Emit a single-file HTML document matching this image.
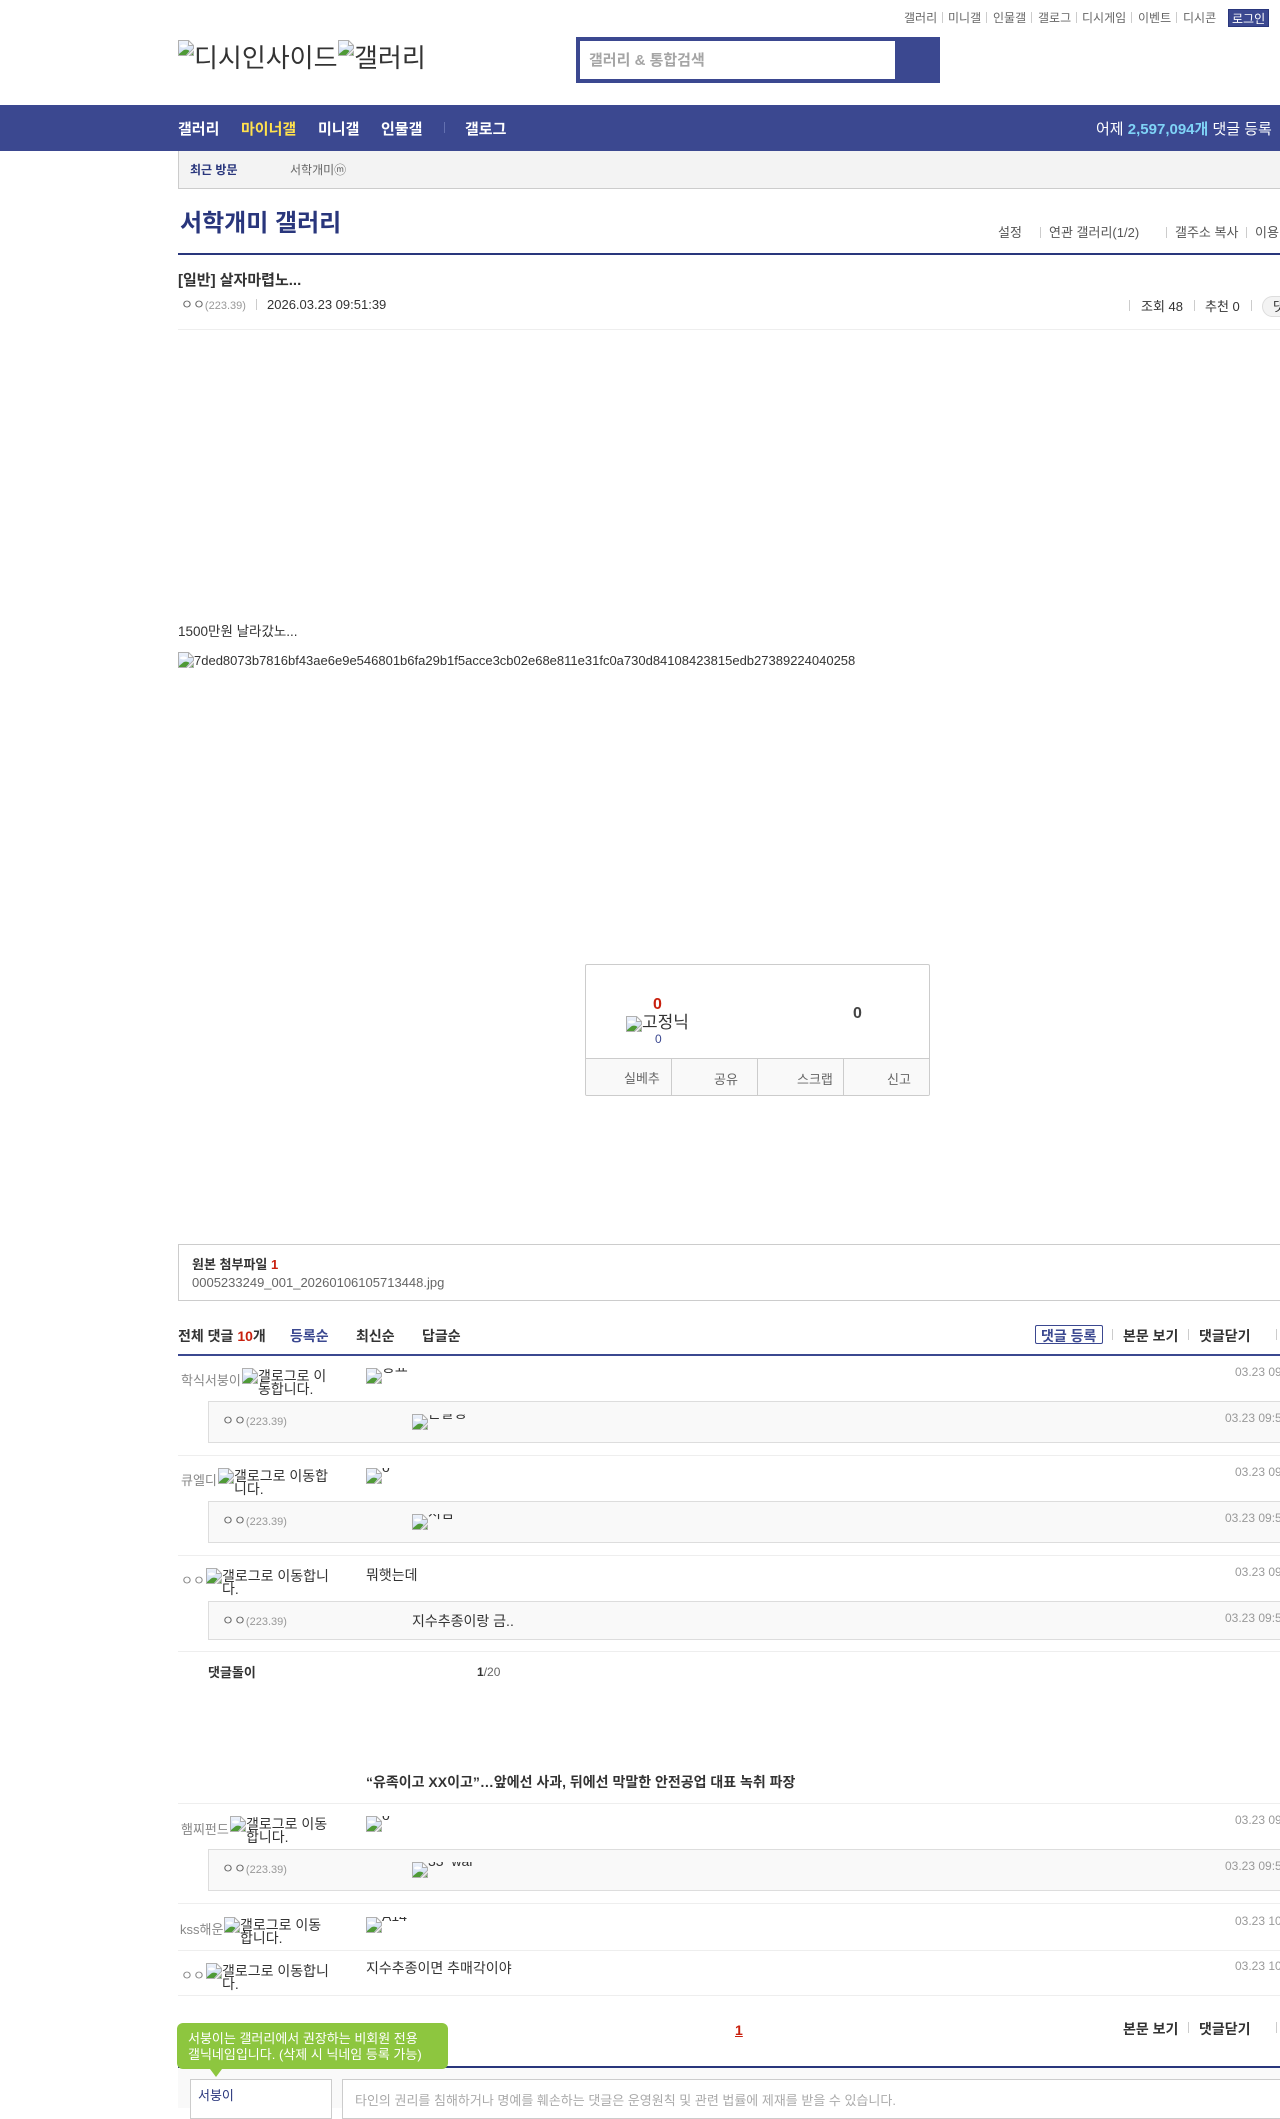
<!DOCTYPE html>
<html lang="ko">
<head>
<meta charset="utf-8">
<title>서학개미 갤러리</title>
<style>
html,body{margin:0;padding:0;background:#fff}
body{width:1280px;height:2108px;position:relative;overflow:hidden;font-family:"Liberation Sans","Noto Sans CJK KR",sans-serif;font-size:13px;color:#333}
.t{position:absolute;white-space:nowrap;line-height:16px}
.r{position:absolute}
.b{font-weight:bold}
.ic{position:absolute;width:16px;height:16px}
.sep{position:absolute;width:1px;height:11px;background:#ccc}
.hl{position:absolute;left:178px;width:1102px;height:1px;background:#eee}
.rep{position:absolute;left:208px;width:1072px;box-sizing:border-box;background:#f9f9f9;border:1px solid #ddd;border-right:0}
.nick{color:#888;font-size:13px}
.g{position:absolute;font-size:14px;line-height:13px;color:#333;white-space:normal;word-break:break-all}
.tm{color:#999;font-size:12px}
.clip{position:absolute;overflow:hidden;height:6px;font-size:14px;color:#333;white-space:nowrap}
.clip span{position:absolute;left:0;bottom:-1px;line-height:16px}
.au{color:#666;font-size:13px}
.au i{font-style:normal;color:#999;font-size:11px}
.top{font-size:12px;color:#666}
.nav{font-size:15px;font-weight:bold;color:#fff}
.blink{font-size:14px;font-weight:bold;color:#333}
.tl{font-size:13px;color:#555}
</style>
</head>
<body>
<svg width="0" height="0" style="position:absolute">
<defs><linearGradient id="sky" x1="0" y1="0" x2="0" y2="1"><stop offset="0" stop-color="#eef3fb"/><stop offset="1" stop-color="#c6d6f0"/></linearGradient></defs>
<symbol id="bi" viewBox="0 0 16 16">
<path d="M.5.5H10.5L15.5 5.5V8.5L8.5 15.5H.5Z" fill="url(#sky)" stroke="#b0b0b0"/>
<path d="M10.5.5V5.5H15.5Z" fill="#fff" stroke="#b0b0b0"/>
<ellipse cx="5.5" cy="6" rx="3.6" ry="1.5" fill="#fff"/>
<path d="M1 15V14L5.5 10.3C7.5 9.2 10 9.6 11.5 11L8 15Z" fill="#4f9a36"/>
<path d="M11.5 15.5L15.5 11.5V15.5Z" fill="#fff" stroke="#b0b0b0"/>
<path d="M13 15L15 13V15Z" fill="#4f9a36"/>
</symbol>
</svg>

<!-- top links -->
<div class="t top" style="left:904px;top:10px">갤러리</div><div class="sep" style="left:942px;top:12px"></div>
<div class="t top" style="left:948px;top:10px">미니갤</div><div class="sep" style="left:986px;top:12px"></div>
<div class="t top" style="left:993px;top:10px">인물갤</div><div class="sep" style="left:1031px;top:12px"></div>
<div class="t top" style="left:1038px;top:10px">갤로그</div><div class="sep" style="left:1076px;top:12px"></div>
<div class="t top" style="left:1082px;top:10px">디시게임</div><div class="sep" style="left:1131px;top:12px"></div>
<div class="t top" style="left:1138px;top:10px">이벤트</div><div class="sep" style="left:1176px;top:12px"></div>
<div class="t top" style="left:1183px;top:10px">디시콘</div>
<div class="r" style="left:1228px;top:9px;width:41px;height:18px;background:#3b4890;border:1px solid #29367c;box-sizing:border-box"></div>
<div class="t" style="left:1232px;top:11px;font-size:12px;color:#fff">로그인</div>

<!-- logo -->
<svg class="ic" style="left:178px;top:40px"><use href="#bi"/></svg>
<div class="t" style="left:194px;top:44px;font-size:26px;line-height:28px;color:#333">디시인사이드</div>
<svg class="ic" style="left:338px;top:40px"><use href="#bi"/></svg>
<div class="t" style="left:354px;top:44px;font-size:26px;line-height:28px;color:#333">갤러리</div>

<!-- search -->
<div class="r" style="left:576px;top:37px;width:364px;height:46px;background:#3b4890"></div>
<div class="r" style="left:580px;top:41px;width:315px;height:38px;background:#fff"></div>
<div class="t b" style="left:589px;top:53px;font-size:15px;color:#a5a5a5">갤러리 &amp; 통합검색</div>

<!-- nav -->
<div class="r" style="left:0;top:105px;width:1280px;height:46px;background:#3b4890"></div>
<div class="t nav" style="left:178px;top:122px">갤러리</div>
<div class="t nav" style="left:241px;top:122px;color:#ffe14d">마이너갤</div>
<div class="t nav" style="left:318px;top:122px">미니갤</div>
<div class="t nav" style="left:381px;top:122px">인물갤</div>
<div class="r" style="left:444px;top:122px;width:1px;height:11px;background:#6370b0"></div>
<div class="t nav" style="left:465px;top:122px">갤로그</div>
<div class="t" style="left:1096px;top:122px;font-size:15px;color:#fff">어제 <span class="b" style="color:#7fd3f7">2,597,094개</span> 댓글 등록</div>

<!-- recent -->
<div class="r" style="left:178px;top:151px;width:1102px;height:38px;box-sizing:border-box;background:#f3f3f3;border-left:1px solid #ccc;border-bottom:1px solid #ccc"></div>
<div class="t b" style="left:190px;top:162px;font-size:12px;color:#29367c">최근 방문</div>
<div class="t" style="left:290px;top:162px;font-size:12px;color:#666">서학개미ⓜ</div>

<!-- title -->
<div class="t b" style="left:180px;top:209px;font-size:24px;line-height:30px;color:#29367c">서학개미 갤러리</div>
<div class="t tl" style="left:998px;top:225px">설정</div>
<div class="sep" style="left:1040px;top:227px"></div>
<div class="t tl" style="left:1049px;top:225px">연관 갤러리(1/2)</div>
<div class="sep" style="left:1166px;top:227px"></div>
<div class="t tl" style="left:1175px;top:225px">갤주소 복사</div>
<div class="sep" style="left:1246px;top:227px"></div>
<div class="t tl" style="left:1255px;top:225px">이용</div>
<div class="r" style="left:178px;top:253px;width:1102px;height:2px;background:#29367c"></div>

<!-- post head -->
<div class="t b" style="left:178px;top:273px;font-size:15px;color:#333">[일반] 살자마렵노...</div>
<div class="t au" style="left:181px;top:297px">ㅇㅇ<i>(223.39)</i></div>
<div class="sep" style="left:256px;top:299px"></div>
<div class="t" style="left:267px;top:297px;font-size:13px;color:#333">2026.03.23 09:51:39</div>
<div class="sep" style="left:1129px;top:300px"></div>
<div class="t" style="left:1141px;top:299px;font-size:13px;color:#333">조회 48</div>
<div class="sep" style="left:1194px;top:300px"></div>
<div class="t" style="left:1205px;top:299px;font-size:13px;color:#333">추천 0</div>
<div class="sep" style="left:1251px;top:300px"></div>
<div class="r" style="left:1262px;top:296px;width:40px;height:21px;box-sizing:border-box;border:1px solid #ddd;border-radius:11px;background:#f3f3f3"></div>
<div class="t" style="left:1273px;top:299px;font-size:13px;color:#333">댓글</div>
<div class="hl" style="top:329px"></div>

<!-- content -->
<div class="t" style="left:178px;top:624px;font-size:13.5px;color:#333">1500만원 날라갔노...</div>
<svg class="ic" style="left:178px;top:652px"><use href="#bi"/></svg>
<div class="t" style="left:194px;top:653px;font-size:13px;color:#333">7ded8073b7816bf43ae6e9e546801b6fa29b1f5acce3cb02e68e811e31fc0a730d84108423815edb27389224040258</div>

<!-- vote box -->
<div class="r" style="left:585px;top:964px;width:345px;height:132px;box-sizing:border-box;border:1px solid #ccc;border-radius:2px;background:#fff;overflow:hidden">
  <div class="r" style="left:0;top:93px;width:343px;height:37px;background:#f9f9f9;border-top:1px solid #ccc"></div>
  <div class="r" style="left:85px;top:93px;width:1px;height:38px;background:#ccc"></div>
  <div class="r" style="left:171px;top:93px;width:1px;height:38px;background:#ccc"></div>
  <div class="r" style="left:257px;top:93px;width:1px;height:38px;background:#ccc"></div>
</div>
<div class="t b" style="left:653px;top:997px;font-size:16px;color:#c8200e">0</div>
<svg class="ic" style="left:626px;top:1016px"><use href="#bi"/></svg>
<div class="t" style="left:642px;top:1015px;font-size:17px;color:#333">고정닉</div>
<div class="t" style="left:655px;top:1031px;font-size:12px;color:#3b4890">0</div>
<div class="t b" style="left:853px;top:1006px;font-size:16px;color:#444">0</div>
<div class="t" style="left:624px;top:1071px;font-size:13px;color:#666">실베추</div>
<div class="t" style="left:714px;top:1072px;font-size:13px;color:#666">공유</div>
<div class="t" style="left:797px;top:1072px;font-size:13px;color:#666">스크랩</div>
<div class="t" style="left:887px;top:1072px;font-size:13px;color:#666">신고</div>

<!-- attachment -->
<div class="r" style="left:178px;top:1244px;width:1102px;height:57px;box-sizing:border-box;border:1px solid #ccc;border-right:0"></div>
<div class="t b" style="left:192px;top:1257px;font-size:13px;color:#333">원본 첨부파일 <span style="color:#c8200e">1</span></div>
<div class="t" style="left:192px;top:1275px;font-size:13px;color:#666">0005233249_001_20260106105713448.jpg</div>

<!-- comment header -->
<div class="t b" style="left:178px;top:1328px;font-size:14px;color:#333">전체 댓글 <span style="color:#c8200e">10</span>개</div>
<div class="t b" style="left:290px;top:1328px;font-size:14px;color:#3b4890">등록순</div>
<div class="t b" style="left:356px;top:1328px;font-size:14px;color:#333">최신순</div>
<div class="t b" style="left:422px;top:1328px;font-size:14px;color:#333">답글순</div>
<div class="r" style="left:1035px;top:1325px;width:68px;height:19px;box-sizing:border-box;border:1px solid #3b4890;border-radius:2px"></div>
<div class="t blink" style="left:1041px;top:1328px;color:#3b4890">댓글 등록</div>
<div class="sep" style="left:1112px;top:1329px"></div>
<div class="t blink" style="left:1123px;top:1328px">본문 보기</div>
<div class="sep" style="left:1188px;top:1329px"></div>
<div class="t blink" style="left:1199px;top:1328px">댓글닫기</div>
<div class="sep" style="left:1276px;top:1329px"></div>
<div class="r" style="left:178px;top:1354px;width:1102px;height:2px;background:#3b4890"></div>

<!-- row 1 -->
<div class="t nick" style="left:181px;top:1373px">학식서붕이</div>
<svg class="ic" style="left:242px;top:1368px"><use href="#bi"/></svg>
<div class="g" style="left:258px;top:1370px;width:72px">갤로그로 이동합니다.</div>
<svg class="ic" style="left:366px;top:1368px"><use href="#bi"/></svg>
<div class="clip" style="left:382px;top:1368px;width:60px"><span>동표</span></div>
<div class="t tm" style="left:1235px;top:1364px">03.23 09:51</div>
<div class="rep" style="top:1401px;height:42px"></div>
<div class="t au" style="left:222px;top:1413px">ㅇㅇ<i>(223.39)</i></div>
<svg class="ic" style="left:412px;top:1414px"><use href="#bi"/></svg>
<div class="clip" style="left:428px;top:1414px;width:60px"><span>존잘형</span></div>
<div class="t tm" style="left:1225px;top:1410px">03.23 09:52</div>
<div class="hl" style="top:1455px"></div>

<!-- row 2 -->
<div class="t nick" style="left:181px;top:1473px">큐엘디</div>
<svg class="ic" style="left:218px;top:1468px"><use href="#bi"/></svg>
<div class="g" style="left:234px;top:1470px;width:96px">갤로그로 이동합니다.</div>
<svg class="ic" style="left:366px;top:1468px"><use href="#bi"/></svg>
<div class="clip" style="left:382px;top:1468px;width:30px"><span>o</span></div>
<div class="t tm" style="left:1235px;top:1464px">03.23 09:51</div>
<div class="rep" style="top:1501px;height:42px"></div>
<div class="t au" style="left:222px;top:1513px">ㅇㅇ<i>(223.39)</i></div>
<svg class="ic" style="left:412px;top:1514px"><use href="#bi"/></svg>
<div class="clip" style="left:428px;top:1514px;width:60px"><span>처럼</span></div>
<div class="t tm" style="left:1225px;top:1510px">03.23 09:52</div>
<div class="hl" style="top:1555px"></div>

<!-- row 3 -->
<div class="t nick" style="left:181px;top:1573px">ㅇㅇ</div>
<svg class="ic" style="left:206px;top:1568px"><use href="#bi"/></svg>
<div class="g" style="left:222px;top:1570px;width:108px">갤로그로 이동합니다.</div>
<div class="t" style="left:366px;top:1567px;font-size:14px;color:#333">뭐햇는데</div>
<div class="t tm" style="left:1235px;top:1564px">03.23 09:52</div>
<div class="rep" style="top:1601px;height:39px"></div>
<div class="t au" style="left:222px;top:1613px">ㅇㅇ<i>(223.39)</i></div>
<div class="t" style="left:412px;top:1613px;font-size:14px;color:#333">지수추종이랑 금..</div>
<div class="t tm" style="left:1225px;top:1610px">03.23 09:53</div>
<div class="hl" style="top:1651px"></div>

<!-- dolly -->
<div class="t b" style="left:208px;top:1665px;font-size:13px;color:#333">댓글돌이</div>
<div class="t" style="left:477px;top:1664px;font-size:12px;color:#666"><b style="color:#333">1</b>/20</div>
<div class="t b" style="left:366px;top:1774px;font-size:14px;color:#333">“유족이고 XX이고”…앞에선 사과, 뒤에선 막말한 안전공업 대표 녹취 파장</div>
<div class="hl" style="top:1803px"></div>

<!-- row 4 -->
<div class="t nick" style="left:181px;top:1822px">햄찌펀드</div>
<svg class="ic" style="left:230px;top:1816px"><use href="#bi"/></svg>
<div class="g" style="left:246px;top:1818px;width:84px">갤로그로 이동합니다.</div>
<svg class="ic" style="left:366px;top:1816px"><use href="#bi"/></svg>
<div class="clip" style="left:382px;top:1816px;width:30px"><span>o</span></div>
<div class="t tm" style="left:1235px;top:1812px">03.23 09:58</div>
<div class="rep" style="top:1849px;height:42px"></div>
<div class="t au" style="left:222px;top:1861px">ㅇㅇ<i>(223.39)</i></div>
<svg class="ic" style="left:412px;top:1862px"><use href="#bi"/></svg>
<div class="clip" style="left:428px;top:1862px;width:70px"><span>33_war</span></div>
<div class="t tm" style="left:1225px;top:1858px">03.23 09:59</div>
<div class="hl" style="top:1903px"></div>

<!-- row 5 -->
<div class="t nick" style="left:180px;top:1922px">kss해운</div>
<svg class="ic" style="left:224px;top:1917px"><use href="#bi"/></svg>
<div class="g" style="left:240px;top:1919px;width:90px">갤로그로 이동합니다.</div>
<svg class="ic" style="left:366px;top:1917px"><use href="#bi"/></svg>
<div class="clip" style="left:382px;top:1917px;width:50px"><span>A14</span></div>
<div class="t tm" style="left:1235px;top:1913px">03.23 10:01</div>
<div class="hl" style="top:1950px"></div>

<!-- row 6 -->
<div class="t nick" style="left:181px;top:1968px">ㅇㅇ</div>
<svg class="ic" style="left:206px;top:1963px"><use href="#bi"/></svg>
<div class="g" style="left:222px;top:1965px;width:108px">갤로그로 이동합니다.</div>
<div class="t" style="left:366px;top:1960px;font-size:14px;color:#333">지수추종이면 추매각이야</div>
<div class="t tm" style="left:1235px;top:1958px">03.23 10:04</div>
<div class="hl" style="top:1995px"></div>

<!-- bottom bar -->
<div class="t b" style="left:735px;top:2022px;font-size:14px;color:#c8200e;text-decoration:underline">1</div>
<div class="t blink" style="left:1123px;top:2021px">본문 보기</div>
<div class="sep" style="left:1188px;top:2022px"></div>
<div class="t blink" style="left:1199px;top:2021px">댓글닫기</div>
<div class="sep" style="left:1276px;top:2022px"></div>

<!-- form -->
<div class="r" style="left:178px;top:2066px;width:1102px;height:2px;background:#29367c"></div>
<div class="r" style="left:178px;top:2068px;width:1102px;height:40px;background:#f9f9f9"></div>
<div class="r" style="left:190px;top:2079px;width:142px;height:40px;box-sizing:border-box;background:#fff;border:1px solid #ccc"></div>
<div class="t" style="left:198px;top:2088px;font-size:13px;color:#29367c">서붕이</div>
<div class="r" style="left:342px;top:2079px;width:938px;height:40px;box-sizing:border-box;background:#fff;border:1px solid #ccc;border-right:0"></div>
<div class="t" style="left:355px;top:2093px;font-size:13px;color:#aaa">타인의 권리를 침해하거나 명예를 훼손하는 댓글은 운영원칙 및 관련 법률에 제재를 받을 수 있습니다.</div>

<!-- tooltip -->
<div class="r" style="left:177px;top:2023px;width:271px;height:46px;background:#8dc63f;border-radius:6px"></div>
<div class="r" style="left:210px;top:2069px;width:0;height:0;border-left:6px solid transparent;border-right:6px solid transparent;border-top:8px solid #8dc63f"></div>
<div class="t" style="left:188px;top:2031px;font-size:13px;color:#fff">서붕이는 갤러리에서 권장하는 비회원 전용</div>
<div class="t" style="left:188px;top:2047px;font-size:13px;color:#fff">갤닉네임입니다. (삭제 시 닉네임 등록 가능)</div>
</body>
</html>
